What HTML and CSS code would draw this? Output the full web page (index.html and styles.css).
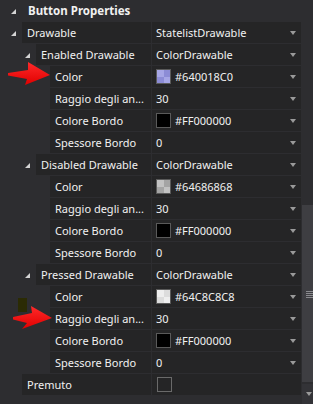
FILE: index.html
```html
<!DOCTYPE html>
<html lang="it">
  <head>
    <meta charset="UTF-8" />
    <title>Button Properties</title>
    <link rel="stylesheet" href="styles.css">
  </head>
  <body>
    <div class="panel">
      <div class="props">
        <div class="row header">
          <div class="indent lvl1"><span class="exp"></span></div>
          <div class="title">Button Properties</div>
        </div>

        <div class="row">
          <div class="indent lvl1"><span class="exp"></span></div>
          <div class="name">Drawable</div>
          <div class="value"><span class="txt">StatelistDrawable</span><span class="drop"></span></div>
        </div>

        <!-- enabled -->
        <div class="row">
          <div class="indent lvl2"><span class="exp"></span></div>
          <div class="name">Enabled Drawable</div>
          <div class="value"><span class="txt">ColorDrawable</span><span class="drop"></span></div>
        </div>
        <div class="row">
          <div class="indent lvl3"></div>
          <div class="name">Color</div>
          <div class="value"><span class="swatch check-blue"></span><span class="txt">#640018C0</span><span class="drop"></span></div>
        </div>
        <div class="row">
          <div class="indent lvl3"></div>
          <div class="name">Raggio degli an...</div>
          <div class="value"><span class="txt">30</span><span class="drop"></span></div>
        </div>
        <div class="row">
          <div class="indent lvl3"></div>
          <div class="name">Colore Bordo</div>
          <div class="value"><span class="swatch black"></span><span class="txt">#FF000000</span><span class="drop"></span></div>
        </div>
        <div class="row">
          <div class="indent lvl3"></div>
          <div class="name">Spessore Bordo</div>
          <div class="value"><span class="txt">0</span><span class="drop"></span></div>
        </div>

        <!-- disabled -->
        <div class="row">
          <div class="indent lvl2"><span class="exp"></span></div>
          <div class="name">Disabled Drawable</div>
          <div class="value"><span class="txt">ColorDrawable</span><span class="drop"></span></div>
        </div>
        <div class="row">
          <div class="indent lvl3"></div>
          <div class="name">Color</div>
          <div class="value"><span class="swatch check-gray"></span><span class="txt">#64686868</span><span class="drop"></span></div>
        </div>
        <div class="row">
          <div class="indent lvl3"></div>
          <div class="name">Raggio degli an...</div>
          <div class="value"><span class="txt">30</span><span class="drop"></span></div>
        </div>
        <div class="row">
          <div class="indent lvl3"></div>
          <div class="name">Colore Bordo</div>
          <div class="value"><span class="swatch black"></span><span class="txt">#FF000000</span><span class="drop"></span></div>
        </div>
        <div class="row">
          <div class="indent lvl3"></div>
          <div class="name">Spessore Bordo</div>
          <div class="value"><span class="txt">0</span><span class="drop"></span></div>
        </div>

        <!-- pressed -->
        <div class="row">
          <div class="indent lvl2"><span class="exp"></span></div>
          <div class="name">Pressed Drawable</div>
          <div class="value"><span class="txt">ColorDrawable</span><span class="drop"></span></div>
        </div>
        <div class="row">
          <div class="indent lvl3"></div>
          <div class="name">Color</div>
          <div class="value"><span class="swatch check-light"></span><span class="txt">#64C8C8C8</span><span class="drop"></span></div>
        </div>
        <div class="row">
          <div class="indent lvl3"></div>
          <div class="name">Raggio degli an...</div>
          <div class="value"><span class="txt">30</span><span class="drop"></span></div>
        </div>
        <div class="row">
          <div class="indent lvl3"></div>
          <div class="name">Colore Bordo</div>
          <div class="value"><span class="swatch black"></span><span class="txt">#FF000000</span><span class="drop"></span></div>
        </div>
        <div class="row">
          <div class="indent lvl3"></div>
          <div class="name">Spessore Bordo</div>
          <div class="value"><span class="txt">0</span><span class="drop"></span></div>
        </div>

        <div class="row">
          <div class="indent lvl1"></div>
          <div class="name">Premuto</div>
          <div class="value"><span class="checkbox"></span></div>
        </div>
      </div>

      <div class="scrollbar">
        <div class="track"></div>
        <div class="thumb"><span class="grip"></span></div>
        <div class="scroll-btn"><span class="drop"></span></div>
      </div>

      <div class="mark"></div>
      <svg class="arrows" width="313" height="404" viewBox="0 0 313 404">
        <defs>
          <linearGradient id="red" x1="0" y1="0" x2="0" y2="1">
            <stop offset="0" stop-color="#ff2a2a" />
            <stop offset="1" stop-color="#e00000" />
          </linearGradient>
        </defs>
        <polygon fill="url(#red)" points="8,73 28,70 28,62 50,75 25,85 27,79 8,75.5" />
        <polygon fill="url(#red)" points="13,317 32,313 31,306 52,318 22,329 27,323 13,319.5" />
      </svg>
    </div>
  </body>
</html>
```

FILE: styles.css
```css
body {
  margin: 0;
  background: #2d2d30;
  font-family: "Noto Sans", "Open Sans", sans-serif;
  font-size: 11px;
  color: #f1f1f1;
}

.panel {
  display: flex;
  width: 313px;
  height: 404px;
  overflow: hidden;
  position: relative;
}

.props {
  width: 301px;
  display: flex;
  flex-direction: column;
  gap: 1px;
}

.row {
  display: flex;
  height: 21px;
  flex: none;
}

.indent {
  flex: none;
  display: flex;
  align-items: center;
  justify-content: flex-end;
  padding-right: 6px;
  box-sizing: border-box;
}

.lvl1 {
  width: 22px;
}

.lvl2 {
  width: 36px;
}

.lvl3 {
  width: 50px;
}

.exp {
  width: 0;
  height: 0;
  border-left: 5px solid transparent;
  border-bottom: 5px solid #d4d4d4;
  margin-top: 1px;
}

.title {
  display: flex;
  align-items: center;
  padding-left: 6px;
  font-weight: bold;
  font-size: 11.5px;
}

.name {
  flex: 1;
  background: #252526;
  padding-left: 5px;
  display: flex;
  align-items: center;
  white-space: nowrap;
  overflow: hidden;
}

.value {
  width: 149px;
  margin-left: 1px;
  background: #252526;
  padding: 0 5px 0 4px;
  box-sizing: border-box;
  display: flex;
  align-items: center;
}

.txt {
  flex: 1;
}

.drop {
  width: 0;
  height: 0;
  border-left: 3.5px solid transparent;
  border-right: 3.5px solid transparent;
  border-top: 4px solid #9a9a9a;
}

.swatch {
  width: 13px;
  height: 13px;
  border: 1px solid #5a5a5a;
  margin-right: 4px;
  flex: none;
}

.black {
  background: #000;
}

.check-blue {
  background: conic-gradient(#8c8cd6 25%, #a6a6e6 0 50%, #8c8cd6 0 75%, #a6a6e6 0);
  background-size: 14px 14px;
  background-position: -7px -7px;
}

.check-gray {
  background: conic-gradient(#a4a4a4 25%, #c2c2c2 0 50%, #a4a4a4 0 75%, #c2c2c2 0);
  background-size: 14px 14px;
  background-position: -7px -7px;
}

.check-light {
  background: conic-gradient(#dcdcdc 25%, #eeeeee 0 50%, #dcdcdc 0 75%, #eeeeee 0);
  background-size: 14px 14px;
  background-position: -7px -7px;
}

.checkbox {
  width: 13px;
  height: 13px;
  border: 1px solid #6a6a6a;
  margin-left: 1px;
}

.scrollbar {
  width: 12px;
  display: flex;
  flex-direction: column;
  background: #2d2d30;
}

.track {
  height: 205px;
}

.thumb {
  height: 177px;
  margin-left: 1px;
  background: #3e3e42;
  display: flex;
  justify-content: flex-end;
  padding-top: 86px;
  box-sizing: border-box;
}

.grip {
  width: 7px;
  height: 7px;
  background: repeating-linear-gradient(#8a8a8e 0 1px, transparent 1px 2px);
}

.scroll-btn {
  flex: 1;
  margin-top: 2px;
  margin-left: 1px;
  background: #333337;
  display: flex;
  justify-content: flex-end;
  align-items: center;
  padding-right: 1px;
}

.mark {
  position: absolute;
  left: 18px;
  top: 298px;
  width: 9px;
  height: 14px;
  background: #2b2b04;
}

.arrows {
  position: absolute;
  left: 0;
  top: 0;
}
```
